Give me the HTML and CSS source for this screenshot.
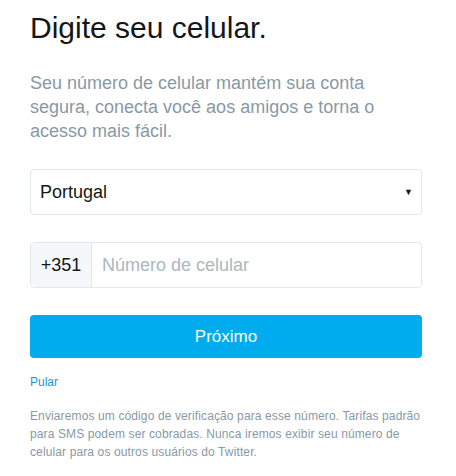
FILE: index.html
```html
<!DOCTYPE html>
<html lang="pt-BR">
<head>
  <meta charset="UTF-8">
  <title>Digite seu celular</title>
  <link rel="stylesheet" href="styles.css">
</head>
<body>
  <div class="page">
    <h1>Digite seu celular.</h1>
    <p class="lead">Seu número de celular mantém sua conta segura, conecta você aos amigos e torna o acesso mais fácil.</p>

    <div class="select">
      <span>Portugal</span>
      <span class="arrow">▼</span>
    </div>

    <div class="phone">
      <div class="prefix">+351</div>
      <input type="text" placeholder="Número de celular">
    </div>

    <button class="next">Próximo</button>

    <a class="skip" href="#">Pular</a>

    <p class="note">Enviaremos um código de verificação para esse número. Tarifas padrão para SMS podem ser cobradas. Nunca iremos exibir seu número de celular para os outros usuários do Twitter.</p>
  </div>
</body>
</html>
```

FILE: styles.css
```css
body {
  margin: 0;
  font-family: 'Liberation Sans', Arial, sans-serif;
  background: #fff;
  color: #14171a;
}
.page {
  width: 392px;
  padding: 10px 30px 0;
}
h1 {
  font-size: 30px;
  font-weight: normal;
  margin: 0;
  line-height: 36px;
}
.lead {
  font-size: 18px;
  line-height: 24px;
  color: #8899a6;
  margin: 25px 0 26px;
}
.select {
  height: 44px;
  border: 1px solid #e1e8ed;
  border-radius: 4px;
  display: flex;
  align-items: center;
  justify-content: space-between;
  padding: 0 8px 0 9px;
  font-size: 18px;
}
.arrow {
  font-size: 9px;
  color: #14171a;
}
.phone {
  margin-top: 27px;
  height: 44px;
  border: 1px solid #e1e8ed;
  border-radius: 4px;
  display: flex;
}
.prefix {
  width: 60px;
  background: #f5f8fa;
  border-right: 1px solid #e1e8ed;
  border-radius: 4px 0 0 4px;
  display: flex;
  align-items: center;
  justify-content: center;
  font-size: 18px;
}
.phone input {
  flex: 1;
  border: 0;
  outline: none;
  padding: 0 10px;
  font-family: inherit;
  font-size: 18px;
  background: transparent;
  border-radius: 0 4px 4px 0;
}
.phone input::placeholder {
  color: #aab8c2;
}
.next {
  display: block;
  width: 100%;
  margin-top: 27px;
  height: 43px;
  border: 0;
  border-radius: 4px;
  background: #00acee;
  color: #fff;
  font-family: inherit;
  font-size: 17px;
}
.skip {
  display: inline-block;
  margin-top: 17px;
  font-size: 12px;
  color: #1b95e0;
  text-decoration: none;
}
.note {
  font-size: 12px;
  line-height: 18px;
  letter-spacing: 0.12px;
  color: #8899a6;
  margin: 17px 0 0;
}
```
